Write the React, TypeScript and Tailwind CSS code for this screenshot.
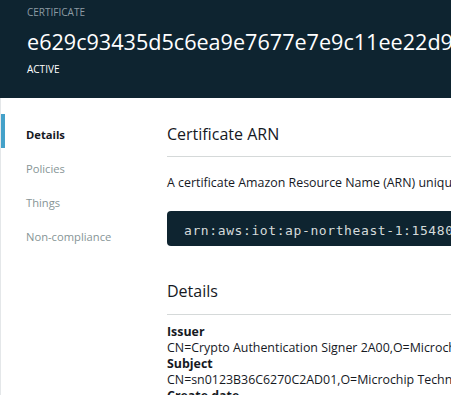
import React from 'react';

const NAV = ['Details', 'Policies', 'Things', 'Non-compliance'];

export default function App() {
  return (
    <div className="w-[451px] h-[395px] overflow-hidden bg-white font-['Open_Sans',sans-serif] text-[#16191f]">
      {/* Header */}
      <header className="h-[98px] bg-[#0e2430] pl-[27px] pt-[4px] whitespace-nowrap">
        <div className="text-[10px] leading-[16px] text-[#8d9ba3] uppercase">Certificate</div>
        <h1 className="mt-[8px] text-[21.6px] leading-[28px] text-white">
          e629c93435d5c6ea9e7677e7e9c11ee22d9f0a
        </h1>
        <div className="mt-[5px] text-[10px] leading-[16px] text-white">ACTIVE</div>
      </header>

      <div className="flex">
        {/* Side nav */}
        <nav className="w-[167px] shrink-0 border-l border-[#e4e7e9] pt-[16px] h-[297px]">
          {NAV.map((item, i) => (
            <div
              key={item}
              className={
                'h-[34px] pt-[13px] pl-[21px] text-[11.2px] leading-[15px] border-l-4 ' +
                (i === 0 ? 'border-[#44a1c9] font-bold text-[#16191f]' : 'border-transparent text-[#879596]')
              }
            >
              {item}
            </div>
          ))}
        </nav>

        {/* Main */}
        <main className="flex-1 min-w-0 pt-[25px] whitespace-nowrap">
          <h2 className="text-[16px] leading-[22px] pb-[11px] border-b border-[#d5d9d9]">Certificate ARN</h2>
          <p className="mt-[18px] text-[12.4px] leading-[16px]">
            A certificate Amazon Resource Name (ARN) uniquely identifies this certificate.
          </p>
          <div className="mt-[20px] h-[35px] w-[320px] rounded-sm bg-[#0e2430] pl-[17px] pt-[13px] font-['DejaVu_Sans_Mono',monospace] text-[13px] leading-[13px] tracking-[0.6px] text-[#d5dbdb]">
            arn:aws:iot:ap-northeast-1:154800000000:cert/e629c93435d5
          </div>

          <h2 className="mt-[34px] text-[16px] leading-[22px] pb-[12px] border-b border-[#d5d9d9]">Details</h2>
          <dl className="mt-[9px] text-[12.4px] leading-[16px]">
            <dt className="font-bold">Issuer</dt>
            <dd>CN=Crypto Authentication Signer 2A00,O=Microchip Technology Inc</dd>
            <dt className="font-bold">Subject</dt>
            <dd>CN=sn0123B36C6270C2AD01,O=Microchip Technology Inc</dd>
            <dt className="font-bold">Create date</dt>
            <dd>Mar 6, 2019 12:00:00 AM +0900</dd>
          </dl>
        </main>
      </div>
    </div>
  );
}
